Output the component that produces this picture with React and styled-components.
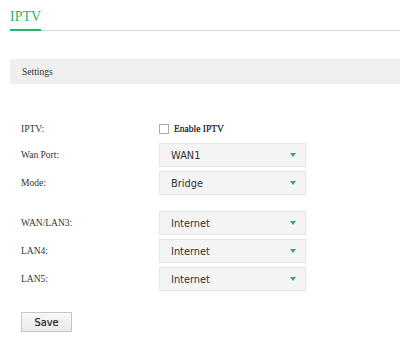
import { styled, createGlobalStyle } from 'styled-components';

const GlobalStyle = createGlobalStyle`
  body {
    margin: 0;
    background: #fff;
    font-family: "Liberation Serif", "Times New Roman", serif;
    color: #333;
  }
`;

const rows = [
  { label: 'Wan Port:', value: 'WAN1' },
  { label: 'Mode:', value: 'Bridge' },
];

const ports = [
  { label: 'WAN/LAN3:', value: 'Internet' },
  { label: 'LAN4:', value: 'Internet' },
  { label: 'LAN5:', value: 'Internet' },
];

const Dropdown = ({ value }) => (
  <Select>
    <span>{value}</span>
    <Caret />
  </Select>
);

const App = () => {
  return (
    <Page>
      <GlobalStyle />
      <TabBar>
        <Tab>IPTV</Tab>
      </TabBar>
      <SectionHead>Settings</SectionHead>
      <Form>
        <Group>
          <Row $short>
            <Label>IPTV:</Label>
            <CheckLabel>
              <Box />
              Enable IPTV
            </CheckLabel>
          </Row>
          {rows.map((r) => (
            <Row key={r.label}>
              <Label>{r.label}</Label>
              <Dropdown value={r.value} />
            </Row>
          ))}
        </Group>
        <Group>
          {ports.map((r) => (
            <Row key={r.label}>
              <Label>{r.label}</Label>
              <Dropdown value={r.value} />
            </Row>
          ))}
        </Group>
        <Button>Save</Button>
      </Form>
    </Page>
  );
};

const Page = styled.div`
  padding: 9px 0 0 10px;
`;

const TabBar = styled.div`
  display: flex;
  border-bottom: 1px solid #d6d6d6;
`;

const Tab = styled.div`
  font-size: 14px;
  line-height: 16px;
  color: #2eb36c;
  padding-bottom: 4px;
  border-bottom: 2px solid #2eb36c;
  margin-bottom: -1px;
`;

const SectionHead = styled.div`
  margin-top: 28px;
  height: 25px;
  display: flex;
  align-items: center;
  padding-left: 12px;
  background: #efefef;
  font-size: 9.5px;
  color: #333;
`;

const Form = styled.div`
  padding: 35px 0 0 11px;
  display: flex;
  flex-direction: column;
  gap: 16px;
`;

const Group = styled.div`
  display: flex;
  flex-direction: column;
  gap: 4px;
`;

const Row = styled.div`
  display: flex;
  align-items: center;
  height: ${(p) => (p.$short ? '20px' : '24px')};
`;

const Label = styled.div`
  width: 138px;
  font-size: 9.5px;
  color: #333;
`;

const CheckLabel = styled.label`
  display: flex;
  align-items: center;
  gap: 5px;
  font-size: 9.5px;
  color: #111;
  -webkit-text-stroke: 0.2px #111;
`;

const Box = styled.span`
  width: 8px;
  height: 8px;
  border: 1px solid #aaa;
  background: #fff;
`;

const Select = styled.div`
  box-sizing: border-box;
  width: 147px;
  height: 24px;
  display: flex;
  align-items: center;
  justify-content: space-between;
  padding: 0 9px 0 11px;
  background: #f4f4f4;
  border: 1px solid #e6e6e6;
  font-family: "DejaVu Sans", Verdana, sans-serif;
  font-size: 9.8px;
  color: #333;
`;

const Caret = styled.span`
  width: 0;
  height: 0;
  border-left: 3.5px solid transparent;
  border-right: 3.5px solid transparent;
  border-top: 4px solid #36a865;
`;

const Button = styled.button`
  box-sizing: border-box;
  margin-top: 5px;
  width: 51px;
  height: 20px;
  padding: 0;
  background: linear-gradient(#f7f7f7, #ebebeb);
  border: 1px solid #c6c6c6;
  font-family: "DejaVu Sans", Verdana, sans-serif;
  font-size: 9.8px;
  color: #222;
  -webkit-text-stroke: 0.2px #222;
`;

export default App;
